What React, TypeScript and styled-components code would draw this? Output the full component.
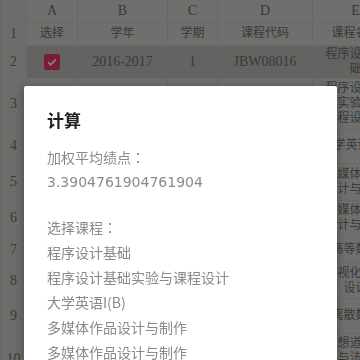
import styled, { createGlobalStyle } from "styled-components";

const GlobalStyle = createGlobalStyle`
  html, body {
    margin: 0;
    padding: 0;
    width: 360px;
    height: 360px;
    overflow: hidden;
    background: #dededa;
  }
`;

const columns = [26, 51, 90, 50, 95, 86, 80];

interface Course {
  year: string;
  term: string;
  code: string;
  name: string;
  height: number;
  checked?: boolean;
}

const rows: Course[] = [
  { year: "2016-2017", term: "1", code: "JBW08016", name: "程序设计基础", height: 33, checked: true },
  { year: "2016-2017", term: "1", code: "JBW08017", name: "程序设计基础实验与课程设计", height: 50 },
  { year: "2016-2017", term: "1", code: "JBW01001", name: "大学英语I(B)", height: 35 },
  { year: "2016-2017", term: "1", code: "JBW08020", name: "多媒体作品设计与制作", height: 37 },
  { year: "2016-2017", term: "1", code: "JBW08021", name: "多媒体作品设计与制作", height: 35 },
  { year: "2016-2017", term: "1", code: "JBW03001", name: "高等数学", height: 28 },
  { year: "2016-2017", term: "1", code: "JBW08030", name: "可视化程序设计", height: 35 },
  { year: "2016-2017", term: "1", code: "JBW03010", name: "离散数学", height: 35 },
  { year: "2016-2017", term: "1", code: "JBW06001", name: "思想道德修养与法律基础", height: 50 },
];

const chosen = [
  "程序设计基础",
  "程序设计基础实验与课程设计",
  "大学英语I(B)",
  "多媒体作品设计与制作",
  "多媒体作品设计与制作",
];

export default function App() {
  return (
    <>
      <GlobalStyle />
      <Sheet>
        <colgroup>
          {columns.map((w, i) => (
            <col key={i} style={{ width: w }} />
          ))}
        </colgroup>
        <tbody>
          <Row $height={22}>
            <NumCell />
            {["A", "B", "C", "D", "E", "F"].map((l) => (
              <Cell key={l}>{l}</Cell>
            ))}
          </Row>
          <Row $height={23}>
            <NumCell>1</NumCell>
            <Cell $cjk>选择</Cell>
            <Cell $cjk>学年</Cell>
            <Cell $cjk>学期</Cell>
            <Cell $cjk>课程代码</Cell>
            <Cell $cjk>课程名称</Cell>
            <Cell $cjk>学分</Cell>
          </Row>
          {rows.map((r, i) => (
            <Row key={i} $height={r.height} $active={r.checked}>
              <NumCell>{i + 2}</NumCell>
              <Cell>
                {r.checked && (
                  <Check>
                    <svg width="12" height="12" viewBox="0 0 12 12">
                      <path d="M2 6.2l2.6 2.5L10 3.4" fill="none" stroke="#fff" strokeWidth="1.8" />
                    </svg>
                  </Check>
                )}
              </Cell>
              <Cell>{r.year}</Cell>
              <Cell>{r.term}</Cell>
              <Cell>{r.code}</Cell>
              <NameCell>{r.name}</NameCell>
              <Cell>3</Cell>
            </Row>
          ))}
        </tbody>
      </Sheet>

      <Overlay>
        <Dialog>
          <Title>计算</Title>
          <Block>
            <Line>
              加权平均绩点<Colon>：</Colon>
            </Line>
            <Line $latin>3.3904761904761904</Line>
          </Block>
          <Block $gap={20}>
            <Line>
              选择课程<Colon>：</Colon>
            </Line>
            {chosen.map((c, i) => (
              <Line key={i}>{c}</Line>
            ))}
          </Block>
        </Dialog>
      </Overlay>
    </>
  );
}

const Sheet = styled.table`
  table-layout: fixed;
  border-collapse: collapse;
  width: 478px;
  font-family: "Liberation Serif", "Noto Sans CJK SC", serif;
  font-size: 14px;
  color: #747472;
`;

const Row = styled.tr<{ $height: number; $active?: boolean }>`
  height: ${(p) => p.$height}px;
  background: ${(p) => (p.$active ? "#c6c6c2" : "#dededa")};
`;

const Cell = styled.td<{ $cjk?: boolean }>`
  padding: 0;
  text-align: center;
  vertical-align: middle;
  border-left: 1px solid #cfcfcb;
  border-bottom: 1px solid #d2d2ce;
  font-size: ${(p) => (p.$cjk ? "12px" : "14px")};
  line-height: 15px;
  white-space: nowrap;
`;

const NumCell = styled(Cell)`
  background: #d8d8d4;
`;

const NameCell = styled(Cell)`
  padding: 0 8px;
  font-size: 12px;
  line-height: 15px;
  white-space: normal;
  word-break: break-all;
`;

const Check = styled.span`
  display: inline-flex;
  align-items: center;
  justify-content: center;
  width: 16px;
  height: 16px;
  border-radius: 2px;
  background: #f6386f;
  vertical-align: middle;
`;

const Overlay = styled.div`
  position: fixed;
  inset: 0;
  background: rgba(0, 0, 0, 0.5);
  display: flex;
  align-items: flex-start;
  padding: 86px 0 0 24px;
`;

const Dialog = styled.div`
  width: 313px;
  min-height: 320px;
  box-sizing: border-box;
  background: #ffffff;
  border-radius: 2px;
  box-shadow: 0 2px 10px rgba(0, 0, 0, 0.35);
  padding: 22px 23px;
  display: flex;
  flex-direction: column;
`;

const Title = styled.div`
  font-family: "Noto Sans CJK SC", sans-serif;
  font-size: 17px;
  font-weight: 700;
  line-height: 24px;
  color: #212121;
  margin-bottom: 13px;
`;

const Block = styled.div<{ $gap?: number }>`
  display: flex;
  flex-direction: column;
  margin-top: ${(p) => p.$gap ?? 0}px;
`;

const Line = styled.div<{ $latin?: boolean }>`
  font-family: ${(p) =>
    p.$latin ? `"DejaVu Sans", sans-serif` : `"Noto Sans CJK SC", sans-serif`};
  font-size: 14px;
  line-height: 25px;
  color: #8a8a8a;
  white-space: nowrap;
`;

const Colon = styled.span`
  font-family: "Noto Sans CJK TC", sans-serif;
`;
